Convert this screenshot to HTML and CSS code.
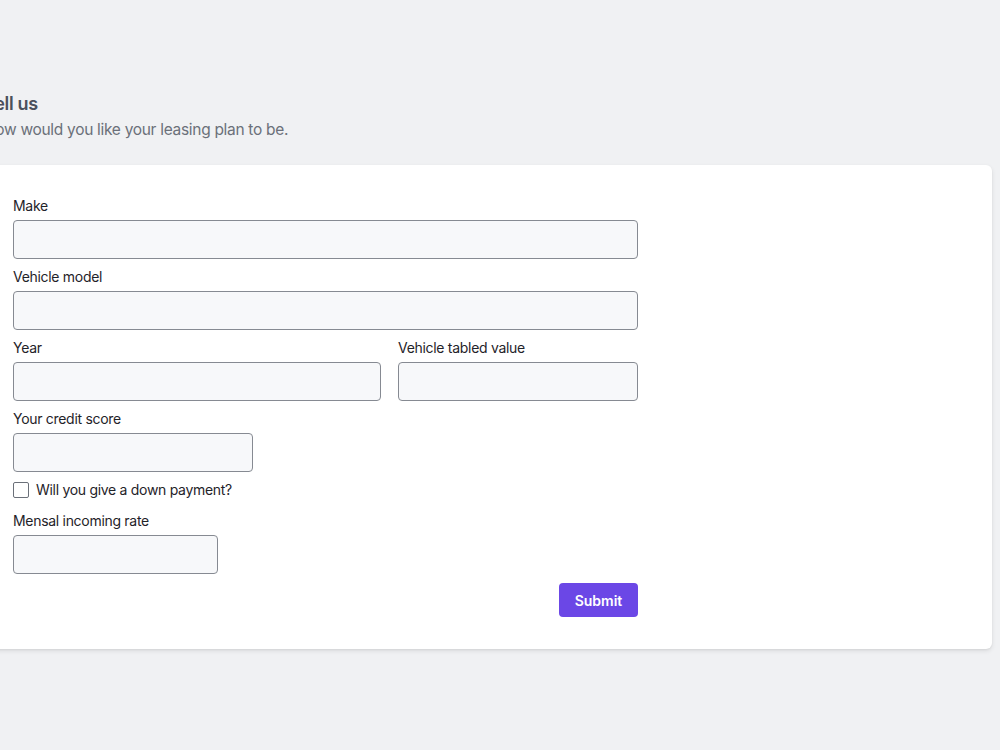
FILE: index.html
```html
<!DOCTYPE html>
<html lang="en">
<head>
<meta charset="UTF-8" />
<meta name="viewport" content="width=device-width, initial-scale=1.0"/>
<title>Tell us</title>
<link rel="stylesheet" href="styles.css">
</head>
<body>

<div class="page">
  <!-- Heading -->
  <div class="intro">
    <h2 class="intro-title">Tell us</h2>
    <p class="intro-text">How would you like your leasing plan to be.</p>
  </div>

  <!-- Form card -->
  <div class="card">
    <form class="lease-form">
      <div class="field">
        <label for="make">Make</label>
        <input id="make" type="text" />
      </div>

      <div class="field">
        <label for="model">Vehicle model</label>
        <input id="model" type="text" />
      </div>

      <div class="row">
        <div class="field">
          <label for="year">Year</label>
          <input id="year" type="text" />
        </div>
        <div class="field">
          <label for="tabled">Vehicle tabled value</label>
          <input id="tabled" type="text" />
        </div>
      </div>

      <div class="field field-md">
        <label for="credit">Your credit score</label>
        <input id="credit" type="text" />
      </div>

      <label class="check">
        <input type="checkbox" />
        <span>Will you give a down payment?</span>
      </label>

      <div class="field field-sm">
        <label for="income">Mensal incoming rate</label>
        <input id="income" type="text" />
      </div>

      <div class="actions">
        <button type="submit" class="btn">Submit</button>
      </div>
    </form>
  </div>
</div>

</body>
</html>
```

FILE: styles.css
```css
/* Base */
* {
  box-sizing: border-box;
  margin: 0;
  padding: 0;
}

html, body {
  height: 100%;
}

body {
  background: #f0f1f3;
  font-family: Inter, "Noto Sans", sans-serif;
  color: #1f2329;
  letter-spacing: -0.3px;
}

/* Page wrapper (scrolled a bit to the right) */
.page {
  margin-left: -16px;
  padding: 92px 8px 0 0;
}

/* Heading */
.intro-title {
  font-size: 18px;
  line-height: 24px;
  font-weight: 600;
  color: #4b505c;
}

.intro-text {
  margin-top: 2px;
  font-size: 15.5px;
  line-height: 24px;
  color: #6b7079;
}

/* Card */
.card {
  margin-top: 23px;
  background: #fff;
  border-radius: 6px;
  box-shadow: 0 2px 5px rgba(0,0,0,0.09), 0 1px 2px rgba(0,0,0,0.05);
  padding: 31px 29px 32px;
}

.lease-form {
  width: 625px;
  display: flex;
  flex-direction: column;
  gap: 8px;
}

/* Fields */
.field {
  display: flex;
  flex-direction: column;
}

.field label {
  font-size: 14px;
  line-height: 20px;
  margin-bottom: 4px;
  color: #1f2329;
}

.field input {
  height: 39px;
  width: 100%;
  background: #f7f8fa;
  border: 1px solid #868a92;
  border-radius: 4px;
  font: inherit;
}

.row {
  display: grid;
  grid-template-columns: 368px 240px;
  column-gap: 17px;
}

.field-md {
  width: 240px;
}

.field-sm {
  width: 205px;
  margin-top: 3px;
}

/* Checkbox */
.check {
  display: flex;
  align-items: center;
  gap: 7px;
  font-size: 14px;
  line-height: 20px;
  color: #1f2329;
}

.check input {
  appearance: none;
  width: 16px;
  height: 16px;
  border: 1px solid #6b7079;
  border-radius: 2px;
  background: #fff;
}

/* Submit */
.actions {
  display: flex;
  justify-content: flex-end;
  margin-top: 1px;
}

.btn {
  width: 79px;
  height: 34px;
  border: none;
  border-radius: 4px;
  background: #6b47e6;
  color: #fff;
  font: inherit;
  font-size: 14px;
  font-weight: 600;
}
```
